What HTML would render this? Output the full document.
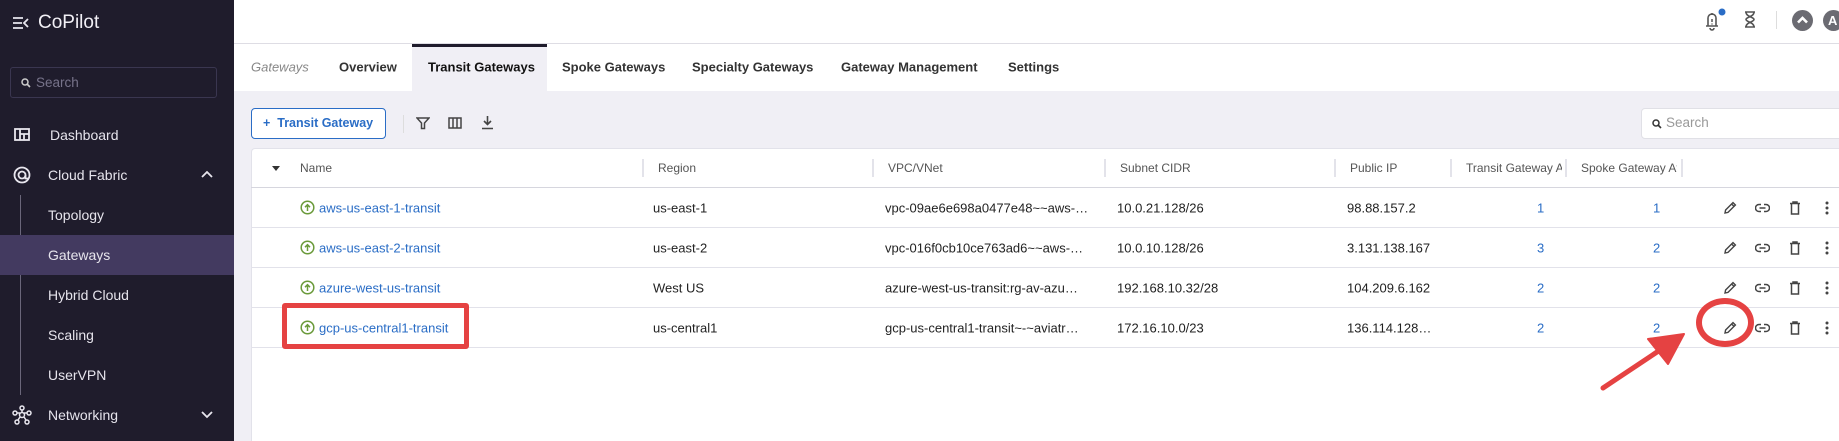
<!DOCTYPE html>
<html><head><meta charset="utf-8"><style>
*{box-sizing:border-box;margin:0;padding:0}
body{width:1839px;height:441px;overflow:hidden;font-family:"Liberation Sans",sans-serif;background:#fff;position:relative}
.a{position:absolute;white-space:nowrap}
#sb{position:absolute;left:0;top:0;width:234px;height:441px;background:#1f1c2c;color:#e8e6ee}
.nav{position:absolute;font-size:14px;color:#e6e4ec;transform:translateY(-50%);white-space:nowrap}
.tab{position:absolute;top:67px;transform:translateY(-50%);font-size:13px;font-weight:bold;color:#333;white-space:nowrap}
.hd{position:absolute;top:168px;transform:translateY(-50%);font-size:12px;color:#555;white-space:nowrap}
.sep{position:absolute;top:159px;width:2px;height:18px;background:#e3e3ea}
.cell{position:absolute;font-size:13px;color:#222;transform:translateY(-50%);white-space:nowrap}
.lnk{color:#2a6dc6}
.rl{position:absolute;left:251px;right:0;height:1px;background:#e2e2ea}
</style></head><body>
<div id="sb">
 <svg class="a" style="left:12px;top:16px" width="17" height="14" viewBox="0 0 17 14"><g stroke="#e8e6ee" stroke-width="1.8" fill="none"><path d="M1 2h10M1 7h9M1 12h10M16 3l-4 4 4 4"/></g></svg>
 <div class="a" style="left:38px;top:12px;font-size:19px;color:#f2f0f6">CoPilot</div>
 <div class="a" style="left:10px;top:67px;width:207px;height:31px;border:1px solid #3a3650;border-radius:3px"></div>
 <svg class="a" style="left:21px;top:78px" width="10" height="10" viewBox="0 0 10 10"><circle cx="4" cy="4" r="3" stroke="#ccc" stroke-width="1.5" fill="none"/><path d="M6 6l3 3" stroke="#ccc" stroke-width="1.6"/></svg>
 <div class="a" style="left:36px;top:75px;font-size:13.5px;color:#77738a">Search</div>
 <svg class="a" style="left:14px;top:128px" width="16" height="13" viewBox="0 0 16 13"><g fill="none" stroke="#e8e6ee" stroke-width="1.8"><rect x="1" y="1" width="14" height="11"/><path d="M6 1v11M6 6h9M10 6v6"/></g></svg>
 <div class="nav" style="left:50px;top:135px">Dashboard</div>
 <svg class="a" style="left:13px;top:166px" width="18" height="18" viewBox="0 0 18 18"><g fill="none" stroke="#e8e6ee" stroke-width="1.8"><circle cx="9" cy="9" r="7.5"/><circle cx="9" cy="9" r="3.5"/><path d="M12.5 9v3.5h3"/></g></svg>
 <div class="nav" style="left:48px;top:175px">Cloud Fabric</div>
 <svg class="a" style="left:201px;top:170px" width="12" height="8" viewBox="0 0 12 8"><path d="M1 7l5-5 5 5" stroke="#e8e6ee" stroke-width="1.8" fill="none"/></svg>
 <div class="a" style="left:20px;top:195px;width:1px;height:200px;background:#6a667a"></div>
 <div class="nav" style="left:48px;top:215px">Topology</div>
 <div class="a" style="left:0;top:235px;width:234px;height:40px;background:#433a60"></div>
 <div class="nav" style="left:48px;top:255px">Gateways</div>
 <div class="nav" style="left:48px;top:295px">Hybrid Cloud</div>
 <div class="nav" style="left:48px;top:335px">Scaling</div>
 <div class="nav" style="left:48px;top:375px">UserVPN</div>
 <svg class="a" style="left:12px;top:405px" width="20" height="20" viewBox="0 0 20 20"><g fill="none" stroke="#e8e6ee" stroke-width="1.5"><circle cx="10" cy="3" r="2"/><circle cx="3" cy="8" r="2"/><circle cx="17" cy="8" r="2"/><circle cx="5" cy="17" r="2"/><circle cx="15" cy="17" r="2"/><path d="M10 5v3M5 8h3M12 8h3M8 12l-2 3M12 12l2 3"/><circle cx="10" cy="10" r="2.5"/></g></svg>
 <div class="nav" style="left:48px;top:415px">Networking</div>
 <svg class="a" style="left:201px;top:411px" width="12" height="8" viewBox="0 0 12 8"><path d="M1 1l5 5 5-5" stroke="#e8e6ee" stroke-width="1.8" fill="none"/></svg>
</div>
<div class="a" style="left:234px;top:43px;right:0;height:1px;background:#dedde4"></div>
<svg class="a" style="left:1702px;top:8px" width="26" height="24" viewBox="0 0 26 24"><path d="M4 18h12M6 18V10a4 4 0 0 1 8 0v8M10 5v2M8 20a2 2 0 0 0 4 0" stroke="#555" stroke-width="1.6" fill="none"/><path d="M10 11v3M10 15.5v1" stroke="#555" stroke-width="1.5"/><circle cx="20" cy="4" r="3.5" fill="#2a6dc6"/></svg>
<svg class="a" style="left:1744px;top:11px" width="12" height="17" viewBox="0 0 12 17"><path d="M1 1h10M1 16h10M2 1c0 5 8 5 8 7.5S2 11 2 16M10 1c0 5-8 5-8 7.5S10 11 10 16" stroke="#555" stroke-width="1.6" fill="none"/></svg>
<div class="a" style="left:1776px;top:11px;width:1px;height:18px;background:#ddd"></div>
<svg class="a" style="left:1792px;top:10px" width="21" height="21" viewBox="0 0 21 21"><circle cx="10.5" cy="10.5" r="10.5" fill="#6b6b72"/><path d="M6 12.5l4.5-4.5 4.5 4.5" stroke="#fff" stroke-width="2.6" fill="none"/></svg>
<div class="a" style="left:1823px;top:10px;width:21px;height:21px;border-radius:50%;background:#6b6b72;color:#fff;font-size:13px;font-weight:bold;line-height:21px;padding-left:5px">A</div>
<div class="a" style="left:412px;top:44px;width:135px;height:47px;background:#f0eff5;border-top:3px solid #1f1c2c"></div>
<div class="tab" style="left:251px;font-style:italic;font-weight:normal;color:#888">Gateways</div>
<div class="tab" style="left:339px">Overview</div>
<div class="tab" style="left:428px;color:#111">Transit Gateways</div>
<div class="tab" style="left:562px">Spoke Gateways</div>
<div class="tab" style="left:692px">Specialty Gateways</div>
<div class="tab" style="left:841px">Gateway Management</div>
<div class="tab" style="left:1008px">Settings</div>
<div class="a" style="left:234px;top:91px;right:0;bottom:0;background:#f0eff5"></div>
<div class="a" style="left:251px;top:108px;width:135px;height:31px;border:1px solid #2a6dc6;border-radius:4px;background:#fff;color:#2a6dc6;font-size:12.5px;font-weight:bold;line-height:29px;padding-left:11px">+&nbsp; Transit Gateway</div>
<div class="a" style="left:403px;top:115px;width:1px;height:18px;background:#ddd"></div>
<svg class="a" style="left:416px;top:117px" width="14" height="13" viewBox="0 0 14 13"><path d="M1 1h12L8.5 6v5.5h-3V6z" stroke="#444" stroke-width="1.5" fill="none"/></svg>
<svg class="a" style="left:448px;top:117px" width="14" height="12" viewBox="0 0 14 12"><g stroke="#444" stroke-width="1.5" fill="none"><rect x="1" y="1" width="12" height="10"/><path d="M5 1v10M9 1v10"/></g></svg>
<svg class="a" style="left:481px;top:115px" width="13" height="15" viewBox="0 0 13 15"><path d="M6.5 1v8M3 6l3.5 3.5L10 6M1 13.5h11" stroke="#444" stroke-width="1.6" fill="none"/></svg>
<div class="a" style="left:1641px;top:108px;width:210px;height:31px;background:#fff;border:1px solid #e0e0e6;border-radius:4px"></div>
<svg class="a" style="left:1652px;top:119px" width="10" height="10" viewBox="0 0 10 10"><circle cx="4" cy="4" r="3" stroke="#333" stroke-width="1.5" fill="none"/><path d="M6 6l3 3" stroke="#333" stroke-width="1.6"/></svg>
<div class="a" style="left:1666px;top:115px;font-size:13.5px;color:#999">Search</div>
<div class="a" style="left:251px;top:148px;right:0;bottom:0;background:#fff;border-top:1px solid #e2e2ea;border-left:1px solid #e2e2ea;border-top-left-radius:4px"></div>
<div class="rl" style="top:187px;background:#d6d6de"></div>
<div class="rl" style="top:227px"></div>
<div class="rl" style="top:267px"></div>
<div class="rl" style="top:307px"></div>
<div class="rl" style="top:347px"></div>
<svg class="a" style="left:272px;top:166px" width="8" height="5" viewBox="0 0 8 5"><path d="M0 0h8L4 5z" fill="#333"/></svg>
<div class="hd" style="left:300px">Name</div>
<div class="sep" style="left:642px"></div><div class="hd" style="left:658px">Region</div>
<div class="sep" style="left:872px"></div><div class="hd" style="left:888px">VPC/VNet</div>
<div class="sep" style="left:1104px"></div><div class="hd" style="left:1120px">Subnet CIDR</div>
<div class="sep" style="left:1334px"></div><div class="hd" style="left:1350px">Public IP</div>
<div class="sep" style="left:1450px"></div><div class="hd" style="left:1466px;width:96px;overflow:hidden">Transit Gateway Att</div>
<div class="sep" style="left:1565px"></div><div class="hd" style="left:1581px;width:96px;overflow:hidden">Spoke Gateway Atta</div>
<div class="sep" style="left:1681px"></div>
<div id="rows"></div>
<script>
var R=[["aws-us-east-1-transit","us-east-1","vpc-09ae6e698a0477e48~~aws-…","10.0.21.128/26","98.88.157.2","1","1"],
["aws-us-east-2-transit","us-east-2","vpc-016f0cb10ce763ad6~~aws-…","10.0.10.128/26","3.131.138.167","3","2"],
["azure-west-us-transit","West US","azure-west-us-transit:rg-av-azu…","192.168.10.32/28","104.209.6.162","2","2"],
["gcp-us-central1-transit","us-central1","gcp-us-central1-transit~-~aviatr…","172.16.10.0/23","136.114.128…","2","2"]];
var h="";
R.forEach(function(r,i){var y=208+i*40;
h+='<svg class="a" style="left:300px;top:'+(y-8)+'px" width="15" height="15" viewBox="0 0 15 15"><circle cx="7.5" cy="7.5" r="6.3" stroke="#6a9a3a" stroke-width="1.5" fill="none"/><path d="M7.5 11V5M5 7.2l2.5-2.5 2.5 2.5" stroke="#6a9a3a" stroke-width="1.5" fill="none"/></svg>';
h+='<div class="cell lnk" style="left:319px;top:'+y+'px">'+r[0]+'</div>';
h+='<div class="cell" style="left:653px;top:'+y+'px">'+r[1]+'</div>';
h+='<div class="cell" style="left:885px;top:'+y+'px">'+r[2]+'</div>';
h+='<div class="cell" style="left:1117px;top:'+y+'px">'+r[3]+'</div>';
h+='<div class="cell" style="left:1347px;top:'+y+'px">'+r[4]+'</div>';
h+='<div class="cell lnk" style="left:1537px;top:'+y+'px">'+r[5]+'</div>';
h+='<div class="cell lnk" style="left:1653px;top:'+y+'px">'+r[6]+'</div>';
h+='<svg class="a" style="left:1723px;top:'+(y-7)+'px" width="14" height="14" viewBox="0 0 14 14"><path d="M2 12l.6-3L10 1.6 12.4 4 5 11.4zM8.6 3l2.4 2.4" stroke="#444" stroke-width="1.4" fill="none"/></svg>';
h+='<svg class="a" style="left:1755px;top:'+(y-5)+'px" width="15" height="10" viewBox="0 0 15 10"><path d="M6 1.5H4a3.5 3.5 0 0 0 0 7h2M9 1.5h2a3.5 3.5 0 0 1 0 7H9M4.5 5h6" stroke="#444" stroke-width="1.5" fill="none"/></svg>';
h+='<svg class="a" style="left:1789px;top:'+(y-7)+'px" width="12" height="14" viewBox="0 0 12 14"><path d="M1 2.5h10M4 2.5V1h4v1.5M2.5 2.5V13h7V2.5" stroke="#444" stroke-width="1.5" fill="none"/></svg>';
h+='<svg class="a" style="left:1825px;top:'+(y-7)+'px" width="4" height="14" viewBox="0 0 4 14"><circle cx="2" cy="2" r="1.5" fill="#444"/><circle cx="2" cy="7" r="1.5" fill="#444"/><circle cx="2" cy="12" r="1.5" fill="#444"/></svg>';
});
document.getElementById("rows").innerHTML=h;
</script>
<div class="a" style="left:282px;top:303px;width:187px;height:46px;border:5px solid #e54242;border-radius:3px"></div>
<div class="a" style="left:1696px;top:298px;width:58px;height:49px;border:6px solid #e54242;border-radius:50%"></div>
<svg class="a" style="left:0;top:0" width="1839" height="441"><path d="M1603 388L1657 352" stroke="#e54242" stroke-width="5" stroke-linecap="round"/><path d="M1684 334L1648 339L1668 364Z" fill="#e54242" stroke="#e54242" stroke-width="2" stroke-linejoin="round"/></svg>
</body></html>
